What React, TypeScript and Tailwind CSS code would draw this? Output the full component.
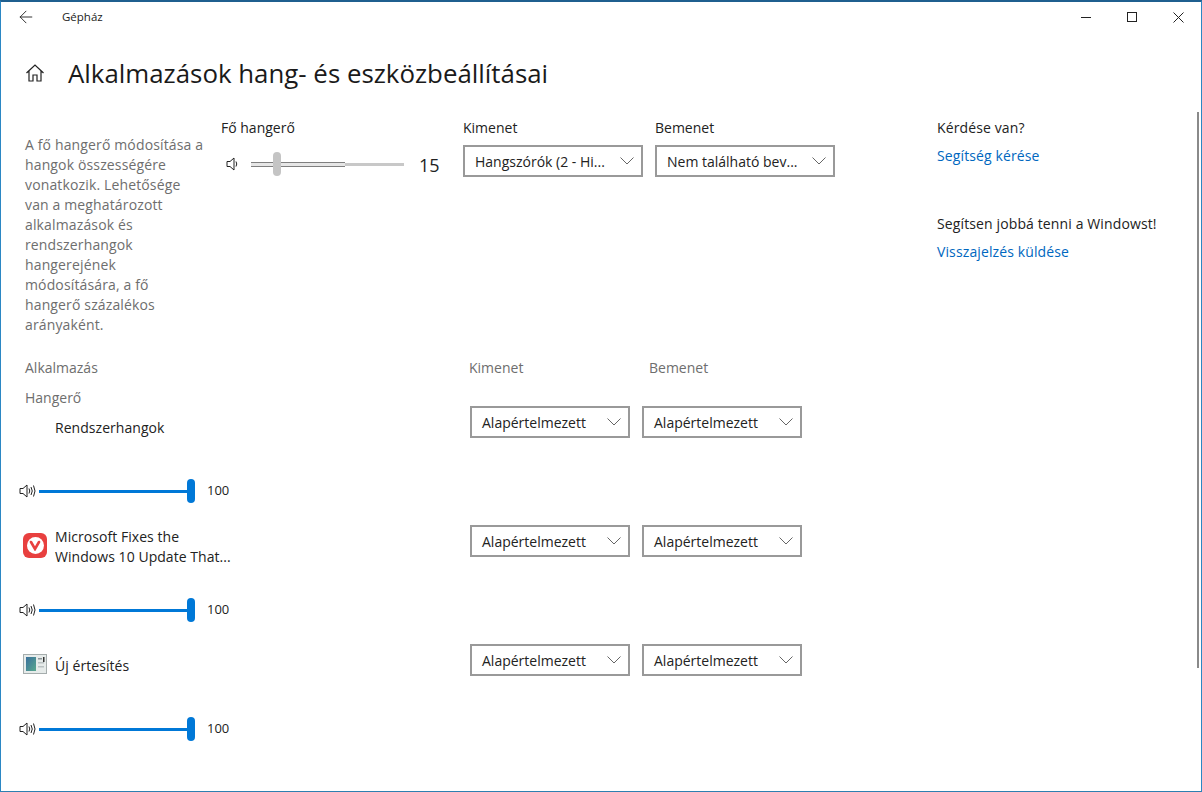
import { ArrowLeft } from 'lucide-react';

const font = 'font-["Open_Sans","Liberation_Sans",sans-serif]';

function Chevron() {
  return (
    <svg width="14" height="8" viewBox="0 0 14 8" fill="none" stroke="#666" strokeWidth="1">
      <path d="M0.5 0.5 L7 7 L13.5 0.5" />
    </svg>
  );
}

function Speaker({ loud }: { loud?: boolean }) {
  return (
    <svg width="18" height="16" viewBox="0 0 18 16" fill="none" stroke="#222" strokeWidth="1">
      <path d="M1 5.5 H4 L8 2 V14 L4 10.5 H1 Z" />
      <path d="M10 5.5 Q11.5 8 10 10.5" />
      {loud && <path d="M12 4 Q14.5 8 12 12" />}
      {loud && <path d="M14.5 2.5 Q17.5 8 14.5 13.5" />}
    </svg>
  );
}

function Select({ text, w }: { text: string; w: string }) {
  return (
    <div className={`flex h-[32px] items-center justify-between border-2 border-[#999] bg-white pl-[10px] pr-[7px] text-[14px] text-[#222] ${w}`}>
      <span className="whitespace-nowrap">{text}</span>
      <Chevron />
    </div>
  );
}

function AppRow({ name, icon }: { name: React.ReactNode; icon?: React.ReactNode }) {
  return (
    <div className="h-[119px]">
      <div className="flex h-[32px]">
        <div className="mt-[6px] flex h-[32px] w-[468px] items-center pl-[21px]">
          <div className="mt-[-4px] flex w-[32px] shrink-0">{icon}</div>
          <div className="w-[180px] text-[14px] leading-[20px] tracking-[0.05px] text-[#222]">{name}</div>
        </div>
        <div className="flex gap-[12px]">
          <Select text="Alapértelmezett" w="w-[160px]" />
          <Select text="Alapértelmezett" w="w-[160px]" />
        </div>
      </div>
      <div className="mt-[43px] flex h-[20px] items-center pl-[17px]">
        <Speaker loud />
        <div className="relative ml-[2px] h-[3px] w-[152px] bg-[#0078d7]">
          <div className="absolute right-[-4px] top-[-11px] h-[24px] w-[8px] rounded-full bg-[#0078d7]" />
        </div>
        <span className="ml-[16px] text-[13px] text-[#222]">100</span>
      </div>
    </div>
  );
}

function VivaldiIcon() {
  return (
    <div className="flex h-[25px] w-[24px] items-center justify-center rounded-[6px] bg-[#e8403f]">
      <div className="flex h-[17px] w-[17px] items-center justify-center rounded-full bg-white">
        <svg width="12" height="11" viewBox="0 0 12 11" fill="none" stroke="#e8403f" strokeWidth="2.6" strokeLinecap="round">
          <path d="M2 2 L6 9 L10 2" />
        </svg>
      </div>
    </div>
  );
}

function NewsIcon() {
  return (
    <svg width="24" height="20" viewBox="0 0 24 20">
      <defs>
        <linearGradient id="news" x1="0" y1="0" x2="1" y2="1">
          <stop offset="0" stopColor="#3a6f9c" />
          <stop offset="1" stopColor="#58a88e" />
        </linearGradient>
      </defs>
      <rect x="0.5" y="0.5" width="23" height="19" fill="#e6ebea" stroke="#a5adad" />
      <rect x="3" y="3" width="10" height="14" fill="url(#news)" />
      <rect x="15" y="4" width="4" height="1.5" fill="#8b9597" />
      <rect x="15" y="8" width="6" height="1.5" fill="#b9c1c2" />
      <rect x="15" y="12" width="6" height="1.5" fill="#b9c1c2" />
      <rect x="20" y="3" width="1.5" height="5" fill="#333" />
    </svg>
  );
}

export default function App() {
  return (
    <div className={`relative flex h-[792px] w-[1202px] flex-col overflow-hidden border-x border-b border-t-2 border-x-[#2b87c4] border-b-[#2e7fb0] border-t-[#1f5f8f] bg-white px-px ${font}`}>
      {/* barra de título */}
      <div className="flex h-[30px] shrink-0 items-center">
        <ArrowLeft className="ml-[14px] h-[20px] w-[20px] text-[#222]" strokeWidth={1.1} />
        <span className="ml-[26px] text-[11.5px] text-[#222]">Gépház</span>
        <div className="ml-auto flex items-center">
          <div className="h-px w-[10px] bg-[#222]" />
          <div className="ml-[36px] h-[10px] w-[10px] border border-[#222]" />
          <svg className="ml-[36px] mr-[16px]" width="11" height="11" viewBox="0 0 11 11" stroke="#222" strokeWidth="1">
            <path d="M0.5 0.5 L10.5 10.5 M10.5 0.5 L0.5 10.5" />
          </svg>
        </div>
      </div>

      {/* título da página */}
      <div className="mt-[23px] flex h-[36px] shrink-0 items-center">
        <svg className="ml-[23px]" width="20" height="20" viewBox="0 0 20 20" fill="none" stroke="#222" strokeWidth="1.2">
          <path d="M1.5 10 L10 2 L18.5 10 M4 8 V18 H8 V12 H12 V18 H16 V8" />
        </svg>
        <h1 className="ml-[23px] text-[25.85px] text-[#1a1a1a]">Alkalmazások hang- és eszközbeállításai</h1>
      </div>

      <div className="flex flex-1">
        <div className="w-[935px] shrink-0">
          {/* hangerő e eszközök */}
          <div className="mt-[27px] flex">
            <p className="mt-[17px] box-content w-[184px] pl-[23px] text-[14px] leading-[20px] tracking-[0.14px] text-[#6e6e6e]">
              A fő hangerő módosítása a<br />
              hangok összességére<br />
              vonatkozik. Lehetősége<br />
              van a meghatározott<br />
              alkalmazások és<br />
              rendszerhangok<br />
              hangerejének<br />
              módosítására, a fő<br />
              hangerő százalékos<br />
              arányaként.
            </p>
            <div className="ml-[12px] w-[242px]">
              <div className="text-[14px] leading-[20px] text-[#222]">Fő hangerő</div>
              <div className="mt-[16px] flex items-center">
                <div className="ml-[5px]"><Speaker /></div>
                <div className="relative ml-[7px] h-[3px] w-[153px] bg-[#c8c8c8]">
                  <div className="absolute left-0 top-[-1px] h-[5px] w-[94px] border-y border-[#7f7f7f] bg-[#e6e6e6]" />
                  <div className="absolute left-[22px] top-[-11px] h-[24px] w-[8px] rounded-full bg-[#c4c4c4]" />
                </div>
                <span className="ml-[15px] mt-[2px] text-[18px] leading-none text-[#222]">15</span>
              </div>
            </div>
            <div className="w-[192px]">
              <div className="text-[14px] leading-[20px] text-[#222]">Kimenet</div>
              <div className="mt-[7px]"><Select text="Hangszórók (2 - Hi..." w="w-[180px]" /></div>
            </div>
            <div>
              <div className="text-[14px] leading-[20px] text-[#222]">Bemenet</div>
              <div className="mt-[7px]"><Select text="Nem található bev..." w="w-[180px]" /></div>
            </div>
          </div>

          {/* alkalmazások */}
          <div className="mt-[23px] flex text-[14px] leading-[20px] text-[#6e6e6e]">
            <span className="w-[467px] pl-[23px]">Alkalmazás</span>
            <span className="w-[180px]">Kimenet</span>
            <span>Bemenet</span>
          </div>
          <div className="mt-[10px] pl-[23px] text-[14px] leading-[20px] text-[#6e6e6e]">Hangerő</div>

          <div className="mt-[-2px]">
            <AppRow name="Rendszerhangok" />
            <AppRow
              name={<>Microsoft Fixes the<br />Windows 10 Update That...</>}
              icon={<VivaldiIcon />}
            />
            <AppRow name="Új értesítés" icon={<NewsIcon />} />
          </div>
        </div>

        {/* lateral */}
        <aside className="mt-[27px] text-[14px] leading-[20px] tracking-[0.12px] text-[#222]">
          <div>Kérdése van?</div>
          <div className="mt-[8px] text-[#0067c0]">Segítség kérése</div>
          <div className="mt-[48px]">Segítsen jobbá tenni a Windowst!</div>
          <div className="mt-[8px] text-[#0067c0]">Visszajelzés küldése</div>
        </aside>
      </div>

      {/* barra de rolagem */}
      <div className="absolute right-[2px] top-[110px] h-[556px] w-[2px] bg-[#8a8a8a]" />
    </div>
  );
}
